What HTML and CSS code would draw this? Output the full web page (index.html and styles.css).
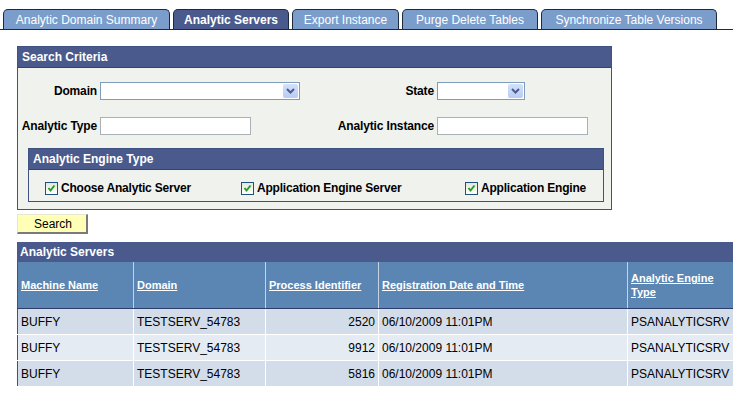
FILE: index.html
```html
<!DOCTYPE html>
<html>
<head>
    <title>Analytic Servers</title>
    <link rel="stylesheet" href="styles.css">
</head>
<body>
    <div class="tabs">
        <div class="tab t1">Analytic Domain Summary</div>
        <div class="tab t2 active">Analytic Servers</div>
        <div class="tab t3">Export Instance</div>
        <div class="tab t4">Purge Delete Tables</div>
        <div class="tab t5">Synchronize Table Versions</div>
    </div>

    <div class="page">
        <div class="criteria">
            <div class="box-head">Search Criteria</div>
            <div class="criteria-body">
                <div class="fields">
                    <label class="field-label">Domain</label>
                    <div class="select domain">
                        <span class="arrow"><svg width="9" height="6" viewBox="0 0 9 6"><path d="M1 1 L4.5 4.5 L8 1" fill="none" stroke="#4b5d86" stroke-width="2"/></svg></span>
                    </div>
                    <label class="field-label">State</label>
                    <div class="select state">
                        <span class="arrow"><svg width="9" height="6" viewBox="0 0 9 6"><path d="M1 1 L4.5 4.5 L8 1" fill="none" stroke="#4b5d86" stroke-width="2"/></svg></span>
                    </div>

                    <label class="field-label">Analytic Type</label>
                    <input type="text" class="text-input">
                    <label class="field-label">Analytic Instance</label>
                    <input type="text" class="text-input">
                </div>

                <div class="engine">
                    <div class="box-head">Analytic Engine Type</div>
                    <div class="engine-body">
                        <label class="check c1"><span class="checkbox"><svg width="11" height="11" viewBox="0 0 11 11"><path d="M2.5 5 L4.5 7.5 L8.5 2.5" fill="none" stroke="#22a020" stroke-width="2"/></svg></span>Choose Analytic Server</label>
                        <label class="check c2"><span class="checkbox"><svg width="11" height="11" viewBox="0 0 11 11"><path d="M2.5 5 L4.5 7.5 L8.5 2.5" fill="none" stroke="#22a020" stroke-width="2"/></svg></span>Application Engine Server</label>
                        <label class="check"><span class="checkbox"><svg width="11" height="11" viewBox="0 0 11 11"><path d="M2.5 5 L4.5 7.5 L8.5 2.5" fill="none" stroke="#22a020" stroke-width="2"/></svg></span>Application Engine</label>
                    </div>
                </div>
            </div>
        </div>

        <button class="search-btn">Search</button>

        <div class="grid-title">Analytic Servers</div>
        <table class="grid">
            <colgroup>
                <col style="width: 116px">
                <col style="width: 132px">
                <col style="width: 113px">
                <col style="width: 249px">
                <col style="width: 106px">
            </colgroup>
            <thead>
                <tr>
                    <th><a>Machine Name</a></th>
                    <th><a>Domain</a></th>
                    <th><a>Process Identifier</a></th>
                    <th><a>Registration Date and Time</a></th>
                    <th><a>Analytic Engine Type</a></th>
                </tr>
            </thead>
            <tbody>
                <tr>
                    <td>BUFFY</td>
                    <td>TESTSERV_54783</td>
                    <td class="num">2520</td>
                    <td>06/10/2009 11:01PM</td>
                    <td>PSANALYTICSRV</td>
                </tr>
                <tr class="alt">
                    <td>BUFFY</td>
                    <td>TESTSERV_54783</td>
                    <td class="num">9912</td>
                    <td>06/10/2009 11:01PM</td>
                    <td>PSANALYTICSRV</td>
                </tr>
                <tr>
                    <td>BUFFY</td>
                    <td>TESTSERV_54783</td>
                    <td class="num">5816</td>
                    <td>06/10/2009 11:01PM</td>
                    <td>PSANALYTICSRV</td>
                </tr>
            </tbody>
        </table>
    </div>
</body>
</html>
```

FILE: styles.css
```css
body {
    margin: 0;
    font-family: "Liberation Sans", Arial, sans-serif;
    font-size: 12px;
    color: #000;
    background: #fff;
}

/* tab strip */
.tabs {
    display: flex;
    gap: 3px;
    padding: 9px 0 0 3px;
    border-bottom: 1px solid #1d2a3c;
}
.tab {
    box-sizing: border-box;
    height: 20px;
    line-height: 21px;
    overflow: hidden;
    text-align: center;
    background-color: #7b9dcb;
    color: #fff;
    border: 1px solid #1d2a3c;
    border-bottom: none;
    border-radius: 5px 5px 0 0;
    white-space: nowrap;
}
.tab.active {
    background-color: #4a5a8c;
    font-weight: bold;
}
.t1 { width: 167px; }
.t2 { width: 116px; }
.t3 { width: 107px; }
.t4 { width: 136px; }
.t5 { width: 176px; }

.page {
    padding-left: 17px;
}

/* search criteria box */
.criteria {
    box-sizing: border-box;
    width: 595px;
    margin-top: 16px;
    border: 1px solid #3f5282;
    background-color: #f0f2ee;
}
.box-head {
    height: 20px;
    line-height: 20px;
    padding-left: 4px;
    background-color: #4a5a8c;
    border-bottom: 1px solid #34446f;
    color: #fff;
    font-weight: bold;
}
.criteria-body {
    padding: 14px 7px 7px 0;
}
.fields {
    display: grid;
    grid-template-columns: 79px 200px 131px 151px;
    column-gap: 3px;
    row-gap: 17px;
    align-items: center;
}
.field-label {
    text-align: right;
    font-weight: bold;
    letter-spacing: -0.15px;
    white-space: nowrap;
}
.select {
    box-sizing: border-box;
    height: 18px;
    border: 1px solid #7f9db9;
    background: #fff;
    display: flex;
    justify-content: flex-end;
    align-items: center;
    padding-right: 1px;
}
.select.state {
    width: 88px;
}
.arrow {
    width: 15px;
    height: 14px;
    border-radius: 2px;
    background: linear-gradient(#d3e0fc, #b8cbf6);
    display: flex;
    align-items: center;
    justify-content: center;
}
.text-input {
    box-sizing: border-box;
    width: 151px;
    height: 18px;
    margin: 0;
    border: 1px solid #a9b0b6;
    background: #fff;
}

/* engine type group */
.engine {
    margin: 13px 0 0 10px;
    border: 1px solid #3f5282;
}
.engine-body {
    display: flex;
    padding: 12px 0 6px 16px;
}
.check {
    display: flex;
    align-items: center;
    gap: 3px;
    font-weight: bold;
    letter-spacing: -0.2px;
    line-height: 13px;
    white-space: nowrap;
}
.c1 { width: 196px; }
.c2 { width: 224px; }
.checkbox {
    box-sizing: border-box;
    width: 13px;
    height: 13px;
    border: 1px solid #1c5180;
    background: linear-gradient(#e6e6e0, #fff);
    display: flex;
}

.search-btn {
    display: block;
    box-sizing: border-box;
    width: 71px;
    height: 20px;
    margin-top: 4px;
    padding: 0 0 0 2px;
    font-family: "Liberation Sans", Arial, sans-serif;
    font-size: 12px;
    color: #000;
    background-color: #ffffb5;
    border: 1px solid #e8e8d0;
    border-right: 2px solid #7a7a7a;
    border-bottom: 2px solid #7a7a7a;
}

/* results grid */
.grid-title {
    width: 716px;
    height: 20px;
    line-height: 20px;
    margin-top: 8px;
    padding-left: 3px;
    box-sizing: border-box;
    background-color: #4a5a8c;
    color: #fff;
    font-weight: bold;
}
.grid {
    width: 716px;
    table-layout: fixed;
    border-collapse: collapse;
    border-left: 1px solid #3f5282;
    border-bottom: 1px solid #3f5282;
}
.grid th {
    height: 46px;
    padding: 0 3px;
    text-align: left;
    font-size: 11px;
    background-color: #5b85b3;
    border-left: 1px solid #c6d3e4;
    border-right: 1px solid #c6d3e4;
    border-bottom: 1px solid #2c3d6c;
    line-height: 14px;
}
.grid th:first-child {
    border-left: none;
}
.grid th a {
    color: #fff;
    text-decoration: underline;
}
.grid td {
    height: 25px;
    padding: 0 3px;
    background-color: #d3dce9;
    border: 1px solid #fff;
    border-top: none;
    white-space: nowrap;
}
.grid td:first-child {
    border-left: none;
}
.grid tr.alt td {
    background-color: #e5ebf3;
}
.grid td.num {
    text-align: right;
}
```
